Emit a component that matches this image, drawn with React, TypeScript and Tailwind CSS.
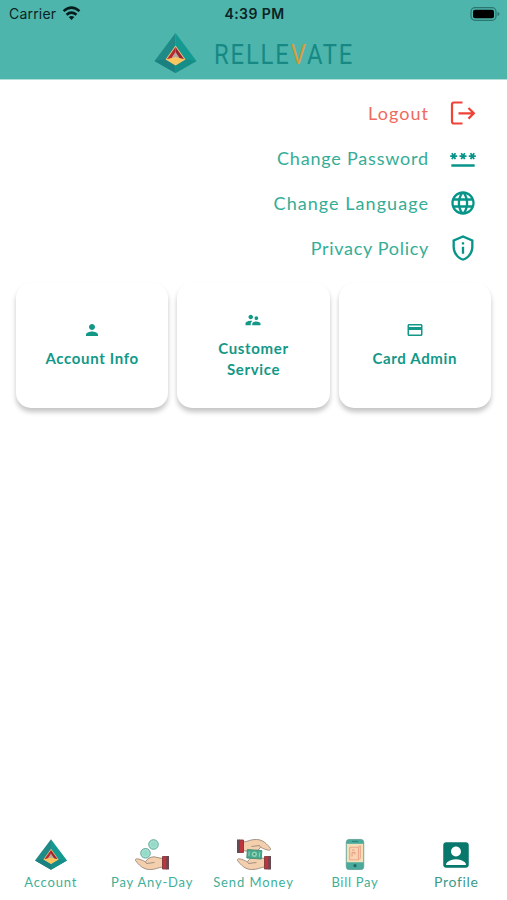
import type { ReactNode } from 'react';
import {
  MdAccountBox,
  MdCreditCard,
  MdLanguage,
  MdOutlinePrivacyTip,
  MdPassword,
  MdPerson,
  MdSupervisorAccount,
} from 'react-icons/md';

function Pyramid({ className }: { className: string }) {
  return (
    <svg viewBox="0 0 42 40" className={className} aria-hidden="true">
      <path d="M21 0 0 28 21 40Z" fill="#1f8a86" />
      <path d="M21 0 42 28 21 40Z" fill="#149a90" />
      <path d="M0 28 11 26 21 32.500V40Z" fill="#1a8080" />
      <path d="M42 28 31 26 21 32.500V40Z" fill="#168e87" />
      <path d="M21 12.500 11 26.500 21 32.500 31 26.500Z" fill="#f3c277" />
      <path d="M21 14 12.500 26 17 25.500 21 19.500Z" fill="#b62a31" />
      <path d="M21 14 29.500 26 25 25.500 21 19.500Z" fill="#982732" />
      <path d="m21 19-4.500 7h9Z" fill="#b9a6a2" />
      <path d="m12 26.500 9-2.500 9 2.500-9 5.500Z" fill="#fbc65e" />
    </svg>
  );
}

function LogoutIcon() {
  return (
    <svg viewBox="0 0 28 28" className="size-7" fill="none" stroke="#ef4338" strokeWidth="2.2" aria-hidden="true">
      <path d="M13.500 3.500H5Q3 3.500 3 5.500v17q0 2 2 2h8.500" />
      <path d="M9.500 14.300h15M19.500 9l5.300 5.300-5.300 5.300" />
    </svg>
  );
}

function OpenHand() {
  return (
    <g strokeWidth=".9" strokeLinejoin="round">
      <path
        d="M2.500 21.500C3 20 7 21 12.500 23.800 14 21 17 18.800 21 18.800L29.500 20.500V29C25 29.500 22 31.800 16.500 31.500 10 31.500 5.500 26.500 2.500 22.500Z"
        fill="#f4cfae"
        stroke="#9a897a"
      />
      <path d="M12.500 23.800 13.500 25.500 21.500 24.500" fill="none" stroke="#9a897a" />
      <path d="M29.500 18.500H34V31H29.500Z" fill="#bd343c" stroke="#853a40" />
      <path d="M33.500 18H36V31.500H33.500Z" fill="#634b55" />
    </g>
  );
}

function CoinsIcon() {
  return (
    <svg viewBox="0 0 38 34" className="h-[34px] w-[38px]" aria-hidden="true">
      <g fill="#a5e0d0" stroke="#5fa899" strokeWidth="1">
        <circle cx="20.500" cy="6.500" r="4.800" />
        <circle cx="12.500" cy="15.300" r="4.800" />
      </g>
      <g fill="#93dac8">
        <circle cx="20.500" cy="6.500" r="2.700" />
        <circle cx="12.500" cy="15.300" r="2.700" />
      </g>
      <OpenHand />
    </svg>
  );
}

function SendIcon() {
  return (
    <svg viewBox="0 0 38 34" className="h-[34px] w-[38px]" aria-hidden="true">
      <g transform="rotate(180 19 16.500)">
        <OpenHand />
      </g>
      <OpenHand />
      <g transform="rotate(4 19 17)">
        <rect x="12" y="12" width="14.500" height="8.500" fill="#49a98d" stroke="#398872" strokeWidth=".8" />
        <circle cx="19.300" cy="16.200" r="2.700" fill="#8fd1b6" />
        <circle cx="19.300" cy="16.200" r="1.100" fill="#3d9276" />
        <path d="M14 14v4.500M24.500 14v4.500" stroke="#8fd1b6" />
      </g>
    </svg>
  );
}

function PhoneIcon() {
  return (
    <svg viewBox="0 0 20 34" className="h-[33px] w-5" aria-hidden="true">
      <rect x="1" y="1.500" width="18" height="31" rx="3" fill="#4aab9c" stroke="#589b91" strokeWidth=".8" />
      <path d="M1.500 6h17v19h-17Z" fill="#f5dfb9" />
      <path d="M4.500 9.500h9v13h-9ZM13.500 9l2-1v13l-2 1.500" fill="#f9d3b2" stroke="#e8967c" strokeWidth=".8" />
      <path d="M7 12.500h2.500M7 19V15h3v2" fill="none" stroke="#e08a70" strokeWidth=".8" />
      <path d="M7 3.500h6" stroke="#267d74" />
      <circle cx="10" cy="28.500" r="1.700" fill="#216b67" />
    </svg>
  );
}

function MenuRow({ label, textClass, children }: { label: string; textClass: string; children: ReactNode }) {
  return (
    <button className="flex h-[45px] items-center justify-end">
      <span className={`mb-px whitespace-nowrap text-[18px] ${textClass}`}>{label}</span>
      <span className="mb-px ml-5 flex size-7 items-center justify-center text-[#07958a]">{children}</span>
    </button>
  );
}

function Card({ icon, children }: { icon: ReactNode; children: ReactNode }) {
  return (
    <button className="flex h-[125px] flex-1 flex-col items-center justify-center rounded-[15px] bg-white text-center text-[15px] leading-[21px] font-bold tracking-[0.650px] text-[#139887] shadow-[0_4px_5px_rgba(0,0,0,0.23)]">
      <span className="mb-[10px] flex h-4 items-center">{icon}</span>
      {children}
    </button>
  );
}

function Tab({ label, textClass, children }: { label: string; textClass: string; children: ReactNode }) {
  return (
    <button className="flex flex-1 flex-col items-center">
      <span className="flex h-9 items-center justify-center pb-px">{children}</span>
      <span className={`whitespace-nowrap leading-[18px] ${textClass}`}>{label}</span>
    </button>
  );
}

export default function App() {
  return (
    <div className="flex h-[900px] w-[507px] flex-col overflow-hidden bg-white font-['Lato',sans-serif]">
      <header className="h-20 border-b border-[#b3ded8] bg-[#4eb5ac]">
        <div className="grid h-[27px] grid-cols-3 items-center pr-[7px] pl-[9px] font-['Inter',sans-serif] text-[14px] text-[#0b2424]">
          <span className="flex items-center gap-[6px]">
            <span className="tracking-[0.200px]">Carrier</span>
            <svg viewBox="0 0 20 16" className="h-[15px] w-[19px]" fill="none" stroke="#071c1c" strokeWidth="2.700" aria-hidden="true">
              <path d="M1.500 5.500q8.500-7.500 17 0M4.700 9.300q5.300-4.500 10.600 0" />
              <path d="M7 11.800q3-2.400 6 0l-3 3Z" fill="#071c1c" stroke="none" />
            </svg>
          </span>
          <span className="text-center font-semibold tracking-[0.400px] whitespace-nowrap">4:39 PM</span>
          <svg viewBox="0 0 30 14" className="h-[14px] w-[30px] justify-self-end" aria-hidden="true">
            <rect x="1" y=".7" width="25" height="12.600" rx="4" fill="none" stroke="#2b7770" strokeWidth="1.300" />
            <rect x="3" y="2.700" width="21" height="8.600" rx="2" fill="#000" />
            <path d="M27.500 5q2 .5 2 2t-2 2Z" fill="#2b7770" />
          </svg>
        </div>
        <div className="flex h-[52px] items-center pl-[154px]">
          <Pyramid className="h-10 w-[43px]" />
          <div className="mt-[3px] ml-[17px] origin-left scale-x-[0.850] font-['Roboto',sans-serif] text-[28px] font-normal tracking-[2.200px] text-[#168985]">
            RELLE<span className="text-[#d99a39]">V</span>ATE
          </div>
        </div>
      </header>

      <nav className="flex h-[202px] flex-col pt-[11px] pr-[30px] text-[#35ad96]">
        <MenuRow label="Logout" textClass="tracking-[1.050px] text-[#f06a60]">
          <LogoutIcon />
        </MenuRow>
        <MenuRow label="Change Password" textClass="tracking-[0.800px]">
          <MdPassword size={29} />
        </MenuRow>
        <MenuRow label="Change Language" textClass="tracking-[1.050px]">
          <MdLanguage size={30} />
        </MenuRow>
        <MenuRow label="Privacy Policy" textClass="tracking-[0.700px]">
          <MdOutlinePrivacyTip size={30} />
        </MenuRow>
      </nav>

      <main className="flex flex-1 items-start gap-[9px] px-4 pt-[1px]">
        <Card icon={<MdPerson size={18} />}>
          <span>Account Info</span>
        </Card>
        <Card icon={<MdSupervisorAccount size={18} />}>
          <span>
            Customer
            <br />
            Service
          </span>
        </Card>
        <Card icon={<MdCreditCard size={18} />}>
          <span>Card Admin</span>
        </Card>
      </main>

      <footer className="flex h-[63px] text-[13px] text-[#3fb098]">
        <Tab label="Account" textClass="tracking-[0.800px]">
          <Pyramid className="h-[31px] w-8" />
        </Tab>
        <Tab label="Pay Any-Day" textClass="tracking-[0.800px]">
          <CoinsIcon />
        </Tab>
        <Tab label="Send Money" textClass="tracking-[0.900px]">
          <SendIcon />
        </Tab>
        <Tab label="Bill Pay" textClass="tracking-[0.700px]">
          <PhoneIcon />
        </Tab>
        <Tab label="Profile" textClass="text-[14px] tracking-[0.700px] text-[#3b9a8c]">
          <MdAccountBox size={34} color="#08786c" />
        </Tab>
      </footer>
    </div>
  );
}
